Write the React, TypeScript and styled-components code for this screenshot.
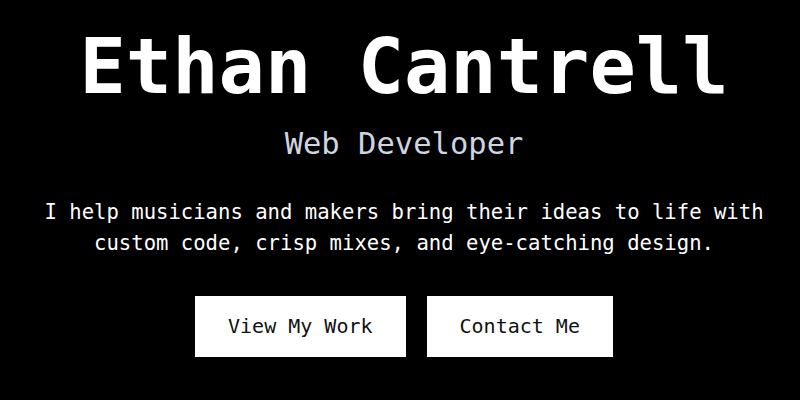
import React from "react";
import styled, { createGlobalStyle } from "styled-components";

const Global = createGlobalStyle`
  html, body { margin: 0; padding: 0; background: #000; }
  body { font-family: "DejaVu Sans Mono", "Liberation Mono", monospace; }
`;

const Hero = styled.section`
  min-height: 100vh;
  box-sizing: border-box;
  display: flex;
  flex-direction: column;
  align-items: center;
  justify-content: center;
  text-align: center;
  color: #fff;
  padding: 0 20px 18px 28px;
`;

const Title = styled.h1`
  margin: 0;
  font-size: 77px;
  line-height: 1.1;
  font-weight: 700;
  color: #fff;
`;

const Subtitle = styled.h2`
  margin: 16px 0 0;
  font-size: 30.5px;
  line-height: 1.2;
  font-weight: 400;
  color: #cdd5e0;
`;

const Lead = styled.p`
  margin: 35px 0 0;
  font-size: 20.6px;
  line-height: 31px;
  color: #fff;
  max-width: 740px;
`;

const Actions = styled.div`
  display: flex;
  gap: 21px;
  margin-top: 37px;
`;

const Button = styled.a`
  display: inline-block;
  background: #fff;
  color: #111;
  font-size: 20px;
  line-height: 25px;
  padding: 18px 33px;
  text-decoration: none;
`;

export default function App() {
  return (
    <>
      <Global />
      <Hero>
        <Title>Ethan Cantrell</Title>
        <Subtitle>Web Developer</Subtitle>
        <Lead>
          I help musicians and makers bring their ideas to life with custom
          code, crisp mixes, and eye-catching design.
        </Lead>
        <Actions>
          <Button href="#work">View My Work</Button>
          <Button href="#contact">Contact Me</Button>
        </Actions>
      </Hero>
    </>
  );
}
